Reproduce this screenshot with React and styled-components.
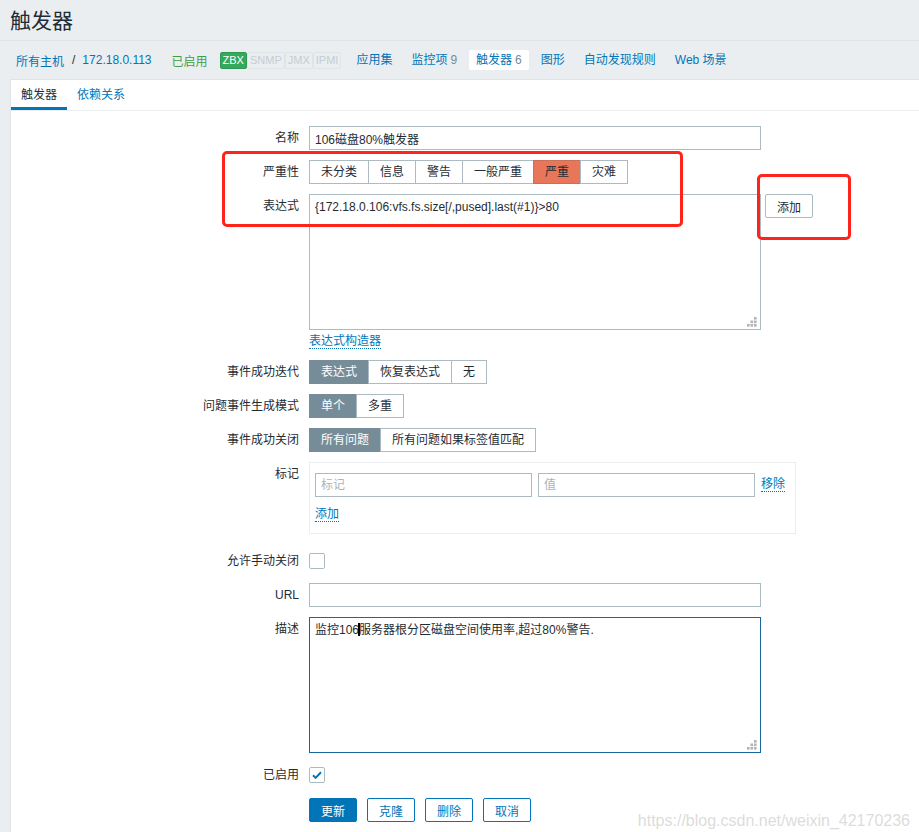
import React from 'react'
import styled, { createGlobalStyle } from 'styled-components'

const GlobalStyle = createGlobalStyle`
  html, body {
    margin: 0;
    padding: 0;
    background: #ebeef0;
  }
  body {
    font-family: "Liberation Sans", Arial, "Noto Sans CJK SC", sans-serif;
    font-size: 12px;
    color: #1f2c33;
  }
`

const Page = styled.div`
  position: relative;
  min-height: 832px;
  display: flex;
  flex-direction: column;
  overflow: hidden;
`

const Header = styled.h1`
  margin: 0;
  height: 40px;
  padding: 0 10px;
  font-size: 21px;
  font-weight: normal;
  line-height: 42px;
  color: #1f2c33;
  border-bottom: 1px solid #dfe4e7;
`

const NavBar = styled.div`
  display: flex;
  align-items: center;
  height: 38px;
  padding-left: 16px;
`

const Crumb = styled.a`
  color: #0275b8;
  text-decoration: none;
`

const Sep = styled.span`
  margin: 0 7px 0 8px;
  color: #1f2c33;
`

const Status = styled.span`
  margin-left: 20px;
  color: #429e47;
`

const Badges = styled.div`
  display: flex;
  margin-left: 12px;
  margin-right: 8px;
`

const Badge = styled.span`
  height: 15px;
  line-height: 15px;
  padding: 0 2px;
  font-size: 11px;
  border: 1px solid ${p => (p.$on ? '#2b9a53' : '#dfe4e7')};
  background: ${p => (p.$on ? '#34a85c' : '#ebeef0')};
  color: ${p => (p.$on ? '#fff' : '#c4cdd2')};
  border-radius: 2px;
`

const NavItem = styled.a`
  height: 20px;
  line-height: 20px;
  padding: 0 7px;
  border-radius: 2px;
  color: #0275b8;
  text-decoration: none;
  background: ${p => (p.$active ? '#fff' : 'transparent')};
  & + & {
    margin-left: 5px;
  }
`

const Count = styled.span`
  margin-left: 3px;
  color: #768d99;
`

const Panel = styled.div`
  flex: 1;
  margin-left: 10px;
  background: #fff;
  border-top: 1px solid #dfe4e7;
  border-left: 1px solid #dfe4e7;
`

const TabBar = styled.div`
  display: flex;
  border-bottom: 1px solid #ebeef0;
`

const Tab = styled.a`
  height: 27px;
  line-height: 30px;
  padding: 0 10px;
  color: ${p => (p.$active ? '#1f2c33' : '#0275b8')};
  border-bottom: 3px solid ${p => (p.$active ? '#0275b8' : 'transparent')};
  text-decoration: none;
`

const Form = styled.div`
  padding: 10px 0 0;
`

const Row = styled.div`
  display: flex;
  gap: 10px;
  padding: 5px 0;
`

const Label = styled.div`
  width: 288px;
  flex: none;
  text-align: right;
  line-height: 24px;
`

const Field = styled.div`
  display: flex;
  align-items: ${p => (p.$inline ? 'center' : 'flex-start')};
  flex-direction: ${p => (p.$inline ? 'row' : 'column')};
  gap: ${p => (p.$inline ? '4px' : '0')};
`

const TextInput = styled.input`
  box-sizing: border-box;
  width: ${p => p.$w || 452}px;
  height: 24px;
  padding: 0 5px;
  border: 1px solid #acbbc2;
  font: inherit;
  color: #1f2c33;
  outline: none;
  &::placeholder {
    color: #acb4b8;
  }
`

const AreaWrap = styled.div`
  position: relative;
  width: 452px;
  height: 136px;
`

const TextArea = styled.textarea`
  box-sizing: border-box;
  width: 100%;
  height: 100%;
  margin: 0;
  padding: 5px 5px;
  border: 1px solid #acbbc2;
  font: inherit;
  color: #1f2c33;
  resize: none;
  outline: none;
`

const FocusedArea = styled.div`
  box-sizing: border-box;
  width: 100%;
  height: 100%;
  padding: 5px 5px;
  border: 1px solid #1a66a0;
  line-height: 14px;
`

const Caret = styled.span`
  display: inline-block;
  width: 2px;
  height: 13px;
  margin: 0 -1px;
  vertical-align: -2px;
  background: #000;
`

const Grip = styled.svg`
  position: absolute;
  right: 4px;
  bottom: 3px;
`

const Segmented = styled.div`
  display: flex;
`

const SegButton = styled.span`
  height: 22px;
  line-height: 22px;
  padding: 0 11px;
  border: 1px solid
    ${p => (p.$tone === 'red' ? '#c9705a' : p.$tone === 'grey' ? '#768d99' : '#acbbc2')};
  background: ${p => (p.$tone === 'red' ? '#e97659' : p.$tone === 'grey' ? '#768d99' : '#fff')};
  color: ${p => (p.$tone === 'grey' ? '#fff' : '#1f2c33')};
  & + & {
    margin-left: -1px;
  }
`

const ExprLine = styled.div`
  display: flex;
  align-items: flex-start;
  gap: 4px;
`

const AddButton = styled.button`
  height: 24px;
  padding: 0 11px;
  border: 1px solid #acbbc2;
  border-radius: 2px;
  background: #fff;
  font: inherit;
  color: #1f2c33;
`

const LinkAction = styled.a`
  display: inline-block;
  line-height: 13px;
  color: #0275b8;
  text-decoration: none;
  border-bottom: 1px dotted #0275b8;
`

const BuilderLine = styled.div`
  height: 20px;
  padding-top: 4px;
  box-sizing: border-box;
`

const TagBox = styled.div`
  box-sizing: border-box;
  width: 487px;
  margin-bottom: 5px;
  padding: 10px 10px 10px 5px;
  border: 1px solid #ebeef0;
`

const TagRow = styled.div`
  display: flex;
  align-items: center;
  gap: 6px;
`

const TagAdd = styled.div`
  margin-top: 10px;
  height: 16px;
`

const Check = styled.span`
  box-sizing: border-box;
  display: inline-flex;
  align-items: center;
  justify-content: center;
  width: 16px;
  height: 16px;
  border: 1px solid #acbbc2;
  border-radius: 2px;
  background: #fff;
`

const ButtonRow = styled.div`
  display: flex;
  gap: 10px;
  padding: 1px 0 10px;
`

const Button = styled.button`
  height: 24px;
  padding: 0 11px;
  border: 1px solid #0275b8;
  border-radius: 2px;
  background: ${p => (p.$primary ? '#0275b8' : '#fff')};
  color: ${p => (p.$primary ? '#fff' : '#0275b8')};
  font: inherit;
`

const Annotation = styled.div`
  position: absolute;
  left: ${p => p.$x}px;
  top: ${p => p.$y}px;
  width: ${p => p.$w}px;
  height: ${p => p.$h}px;
  box-sizing: border-box;
  border: 3px solid #ff2419;
  border-radius: 5px;
  pointer-events: none;
`

const Watermark = styled.div`
  position: absolute;
  right: 9px;
  bottom: 7px;
  font-size: 16px;
  color: rgba(190, 190, 190, 0.55);
  pointer-events: none;
`

const ResizeGrip = () => (
  <Grip width="10" height="10" viewBox="0 0 10 10">
    <g fill="#b4b4b4">
      <rect x="7" y="0" width="2.6" height="2.6" />
      <rect x="3.5" y="3.5" width="2.6" height="2.6" />
      <rect x="7" y="3.5" width="2.6" height="2.6" />
      <rect x="0" y="7" width="2.6" height="2.6" />
      <rect x="3.5" y="7" width="2.6" height="2.6" />
      <rect x="7" y="7" width="2.6" height="2.6" />
    </g>
  </Grip>
)

const severities = ['未分类', '信息', '警告', '一般严重', '严重', '灾难']

export default function App() {
  return (
    <Page>
      <GlobalStyle />
      <Header>触发器</Header>
      <NavBar>
        <Crumb>所有主机</Crumb>
        <Sep>/</Sep>
        <Crumb>172.18.0.113</Crumb>
        <Status>已启用</Status>
        <Badges>
          <Badge $on>ZBX</Badge>
          <Badge>SNMP</Badge>
          <Badge>JMX</Badge>
          <Badge>IPMI</Badge>
        </Badges>
        <NavItem>应用集</NavItem>
        <NavItem>监控项<Count>9</Count></NavItem>
        <NavItem $active>触发器<Count>6</Count></NavItem>
        <NavItem>图形</NavItem>
        <NavItem>自动发现规则</NavItem>
        <NavItem>Web 场景</NavItem>
      </NavBar>

      <Panel>
        <TabBar>
          <Tab $active>触发器</Tab>
          <Tab>依赖关系</Tab>
        </TabBar>

        <Form>
          <Row>
            <Label>名称</Label>
            <Field>
              <TextInput defaultValue="106磁盘80%触发器" />
            </Field>
          </Row>
          <Row>
            <Label>严重性</Label>
            <Segmented>
              {severities.map(s => (
                <SegButton key={s} $tone={s === '严重' ? 'red' : undefined}>{s}</SegButton>
              ))}
            </Segmented>
          </Row>
          <Row>
            <Label>表达式</Label>
            <Field>
              <ExprLine>
                <AreaWrap>
                  <TextArea defaultValue="{172.18.0.106:vfs.fs.size[/,pused].last(#1)}>80" />
                  <ResizeGrip />
                </AreaWrap>
                <AddButton>添加</AddButton>
              </ExprLine>
              <BuilderLine>
                <LinkAction>表达式构造器</LinkAction>
              </BuilderLine>
            </Field>
          </Row>
          <Row>
            <Label>事件成功迭代</Label>
            <Segmented>
              <SegButton $tone="grey">表达式</SegButton>
              <SegButton>恢复表达式</SegButton>
              <SegButton>无</SegButton>
            </Segmented>
          </Row>
          <Row>
            <Label>问题事件生成模式</Label>
            <Segmented>
              <SegButton $tone="grey">单个</SegButton>
              <SegButton>多重</SegButton>
            </Segmented>
          </Row>
          <Row>
            <Label>事件成功关闭</Label>
            <Segmented>
              <SegButton $tone="grey">所有问题</SegButton>
              <SegButton>所有问题如果标签值匹配</SegButton>
            </Segmented>
          </Row>
          <Row>
            <Label>标记</Label>
            <TagBox>
              <TagRow>
                <TextInput $w={217} placeholder="标记" />
                <TextInput $w={217} placeholder="值" />
                <LinkAction>移除</LinkAction>
              </TagRow>
              <TagAdd>
                <LinkAction>添加</LinkAction>
              </TagAdd>
            </TagBox>
          </Row>
          <Row>
            <Label>允许手动关闭</Label>
            <Field $inline>
              <Check />
            </Field>
          </Row>
          <Row>
            <Label>URL</Label>
            <Field>
              <TextInput />
            </Field>
          </Row>
          <Row>
            <Label>描述</Label>
            <Field>
              <AreaWrap>
                <FocusedArea>
                  监控106<Caret />服务器根分区磁盘空间使用率,超过80%警告.
                </FocusedArea>
                <ResizeGrip />
              </AreaWrap>
            </Field>
          </Row>
          <Row>
            <Label>已启用</Label>
            <Field $inline>
              <Check>
                <svg width="12" height="12" viewBox="0 0 12 12">
                  <path d="M2 6.3l2.6 2.6L10 3.2" fill="none" stroke="#0275b8" strokeWidth="2" />
                </svg>
              </Check>
            </Field>
          </Row>
          <Row>
            <Label />
            <ButtonRow>
              <Button $primary>更新</Button>
              <Button>克隆</Button>
              <Button>删除</Button>
              <Button>取消</Button>
            </ButtonRow>
          </Row>
        </Form>
      </Panel>

      <Annotation $x={222} $y={151} $w={461} $h={76} />
      <Annotation $x={757} $y={174} $w={94} $h={66} />
      <Watermark>https://blog.csdn.net/weixin_42170236</Watermark>
    </Page>
  )
}
